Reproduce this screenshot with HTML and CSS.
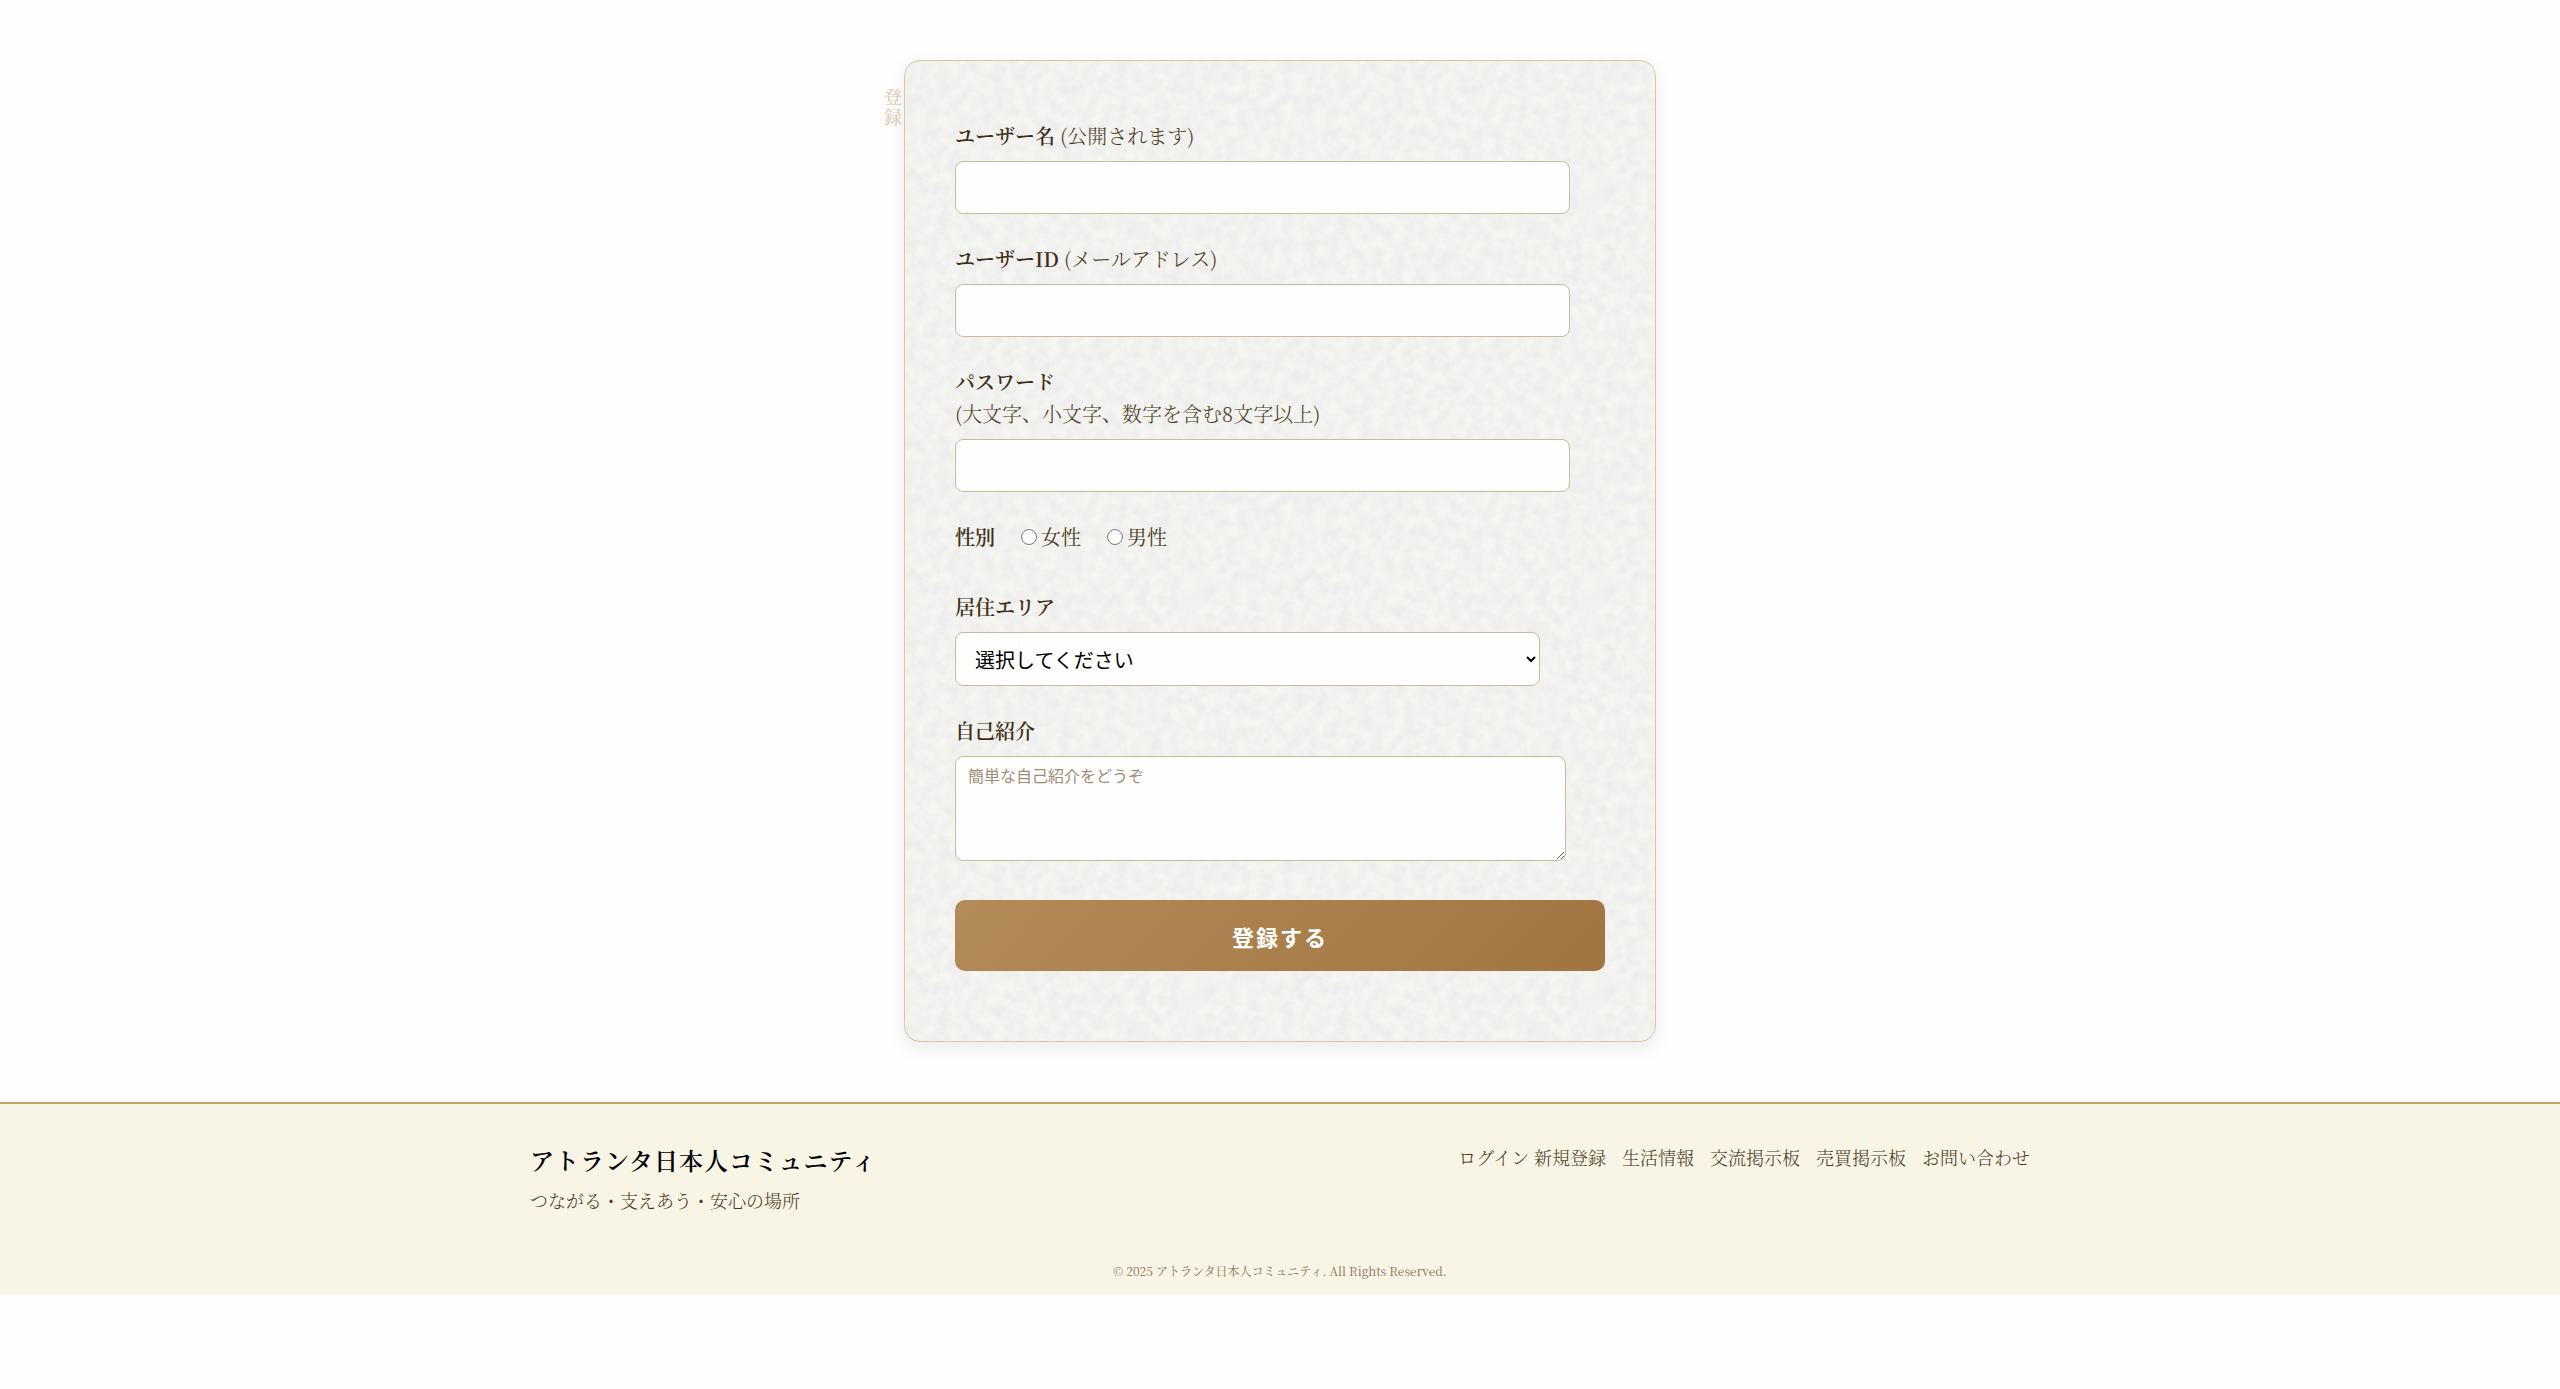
FILE: index.html
```
<!DOCTYPE html>
<html lang="ja">
<head>
    <meta charset="UTF-8">
    <meta name="viewport" content="width=device-width, initial-scale=1.0">
    <title>新規登録</title>
    <link rel="stylesheet" href="styles.css">
</head>
<body>
    <main class="register">
        <form class="register-form">
            <span class="form-tag">登録</span>

            <div class="form-group">
                <label for="username">ユーザー名 <span class="note">(公開されます)</span></label>
                <input type="text" id="username" name="username">
            </div>

            <div class="form-group">
                <label for="email">ユーザーID <span class="note">(メールアドレス)</span></label>
                <input type="email" id="email" name="email">
            </div>

            <div class="form-group">
                <label for="password">パスワード<br><span class="note">(大文字、小文字、数字を含む8文字以上)</span></label>
                <input type="password" id="password" name="password">
            </div>

            <div class="form-group gender">
                <span class="gender-title">性別</span>
                <label class="radio"><input type="radio" name="gender" value="female">女性</label>
                <label class="radio"><input type="radio" name="gender" value="male">男性</label>
            </div>

            <div class="form-group">
                <label for="area">居住エリア</label>
                <select id="area" name="area">
                    <option value="">選択してください</option>
                </select>
            </div>

            <div class="form-group">
                <label for="bio">自己紹介</label>
                <textarea id="bio" name="bio" placeholder="簡単な自己紹介をどうぞ"></textarea>
            </div>

            <button type="submit" class="submit-btn">登録する</button>
        </form>
    </main>

    <footer class="footer">
        <div class="footer-inner">
            <div class="footer-brand">
                <h2>アトランタ日本人コミュニティ</h2>
                <p>つながる・支えあう・安心の場所</p>
            </div>
            <nav class="footer-nav">
                <span><a href="#">ログイン</a> <a href="#">新規登録</a></span>
                <a href="#">生活情報</a>
                <a href="#">交流掲示板</a>
                <a href="#">売買掲示板</a>
                <a href="#">お問い合わせ</a>
            </nav>
        </div>
        <p class="copyright">© 2025 アトランタ日本人コミュニティ. All Rights Reserved.</p>
    </footer>
</body>
</html>
```

FILE: styles.css
```
body {
    margin: 0;
    background: #fefefe;
    color: #4a3b22;
    font-family: "Noto Serif CJK JP", "Noto Serif JP", "Noto Sans CJK JP", serif;
    font-size: 20px;
    line-height: 32px;
}

.register {
    padding: 60px 20px;
}

/* 和紙風のカード */
.register-form {
    position: relative;
    box-sizing: border-box;
    max-width: 752px;
    margin: 0 auto;
    padding: 59px 50px 70px;
    border: 1px solid #d6c7a1;
    border-radius: 16px;
    background-color: #f2f3ef;
    background-image: url("data:image/svg+xml,%3Csvg xmlns='http://www.w3.org/2000/svg' width='400' height='400'%3E%3Cfilter id='n' x='0' y='0' width='100%25' height='100%25' color-interpolation-filters='sRGB'%3E%3CfeTurbulence type='fractalNoise' baseFrequency='0.09' numOctaves='4' stitchTiles='stitch'/%3E%3CfeColorMatrix values='0 0 0 0 0.93 0 0 0 0 0.93 0 0 0 0 0.93 2 0 0 0 -0.5'/%3E%3C/filter%3E%3Crect width='400' height='400' fill='%23f5f6f1'/%3E%3Crect width='400' height='400' filter='url(%23n)'/%3E%3C/svg%3E");
    box-shadow: 0 6px 18px rgba(0, 0, 0, 0.08);
}

.form-tag {
    position: absolute;
    top: 27px;
    right: 100%;
    writing-mode: vertical-rl;
    font-size: 18px;
    line-height: 24px;
    letter-spacing: 2px;
    color: #dcc4a8;
}

.form-group {
    margin-bottom: 29px;
}

.form-group > label {
    display: block;
    margin-bottom: 9px;
    font-weight: 600;
    color: #3e2f16;
}

.form-group .note {
    font-weight: 300;
    color: #4a3b22;
}

.form-group input[type="text"],
.form-group input[type="email"],
.form-group input[type="password"],
.form-group textarea,
.form-group select {
    display: block;
    width: 90%;
    border: 1px solid #c8bb9e;
    border-radius: 8px;
    background: #fefefe;
    font-family: "Noto Sans CJK JP", sans-serif;
}

.form-group input[type="text"],
.form-group input[type="email"],
.form-group input[type="password"] {
    height: 23px;
    padding: 14px;
    font-size: 16px;
}

.form-group select {
    height: 54px;
    padding: 0 15px;
    font-size: 20px;
    color: #000;
}

.form-group textarea {
    height: 83px;
    padding: 10px 12px;
    font-size: 16px;
    line-height: 16px;
    resize: both;
}

.form-group textarea::placeholder {
    color: #a08c72;
}

.form-group.gender {
    display: flex;
    align-items: center;
    gap: 26px;
    padding-bottom: 9px;
}

.gender-title {
    font-weight: 600;
    color: #3e2f16;
}

.form-group > .radio {
    display: flex;
    align-items: center;
    gap: 4px;
    margin: 0;
    font-weight: 400;
    color: #4a3b22;
}

.radio input {
    width: 16px;
    height: 16px;
    margin: 0;
}

.submit-btn {
    display: block;
    width: 100%;
    height: 71px;
    margin-top: 39px;
    border: none;
    border-radius: 10px;
    background: linear-gradient(135deg, #b38b59, #a07540);
    color: #fff;
    font-family: "Noto Sans CJK JP", sans-serif;
    font-size: 22px;
    font-weight: bold;
    letter-spacing: 2px;
    cursor: pointer;
}

.footer {
    padding: 36px 20px 14px;
    border-top: 2px solid #bfa46f;
    background: #f8f4e6;
}

.footer-inner {
    display: flex;
    justify-content: space-between;
    max-width: 1500px;
    margin: 0 auto;
}

.footer-brand h2 {
    margin: 0 0 4px;
    font-size: 24px;
    font-weight: 600;
    line-height: 40px;
    letter-spacing: 1px;
    color: #000;
}

.footer-brand p {
    margin: 0;
    font-size: 18px;
    font-weight: 300;
    line-height: 32px;
}

.footer-nav {
    display: flex;
    gap: 16px;
    font-size: 18px;
    font-weight: 300;
    line-height: 34px;
}

.footer-nav a {
    color: #4a3b22;
    text-decoration: none;
}

.copyright {
    margin: 45px 0 0;
    text-align: center;
    font-size: 12px;
    line-height: 20px;
    color: #8b7355;
}
```
